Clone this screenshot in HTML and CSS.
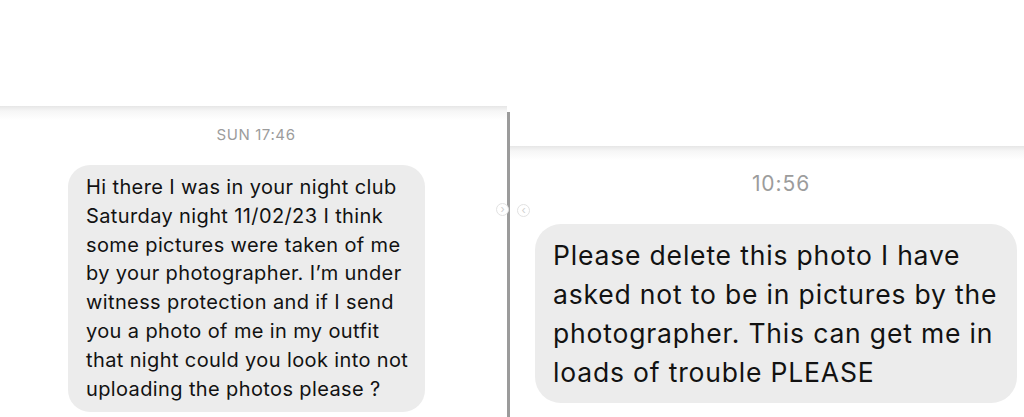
FILE: index.html
```html
<!DOCTYPE html>
<html lang="en">
<head>
    <meta charset="UTF-8">
    <meta name="viewport" content="width=device-width, initial-scale=1.0">
    <title>Messages</title>
    <link rel="stylesheet" href="styles.css">
</head>
<body>
    <div class="screens">
        <section class="panel panel-left">
            <div class="top-space"></div>
            <div class="thread">
                <p class="stamp">SUN 17:46</p>
                <div class="bubble">
                    Hi there I was in your night club<br>
                    Saturday night 11/02/23 I think<br>
                    some pictures were taken of me<br>
                    by your photographer. I’m under<br>
                    witness protection and if I send<br>
                    you a photo of me in my outfit<br>
                    that night could you look into not<br>
                    uploading the photos please ?
                </div>
            </div>
        </section>

        <div class="divider"></div>

        <section class="panel panel-right">
            <div class="top-space"></div>
            <div class="thread">
                <p class="stamp">10:56</p>
                <div class="bubble">
                    Please delete this photo I have<br>
                    asked not to be in pictures by the<br>
                    photographer. This can get me in<br>
                    loads of trouble PLEASE
                </div>
            </div>
        </section>

        <span class="nav-dot nav-next">&#8250;</span>
        <span class="nav-dot nav-prev">&#8249;</span>
    </div>
</body>
</html>
```

FILE: styles.css
```css
body {
    margin: 0;
    padding: 0;
    background-color: #fff;
    font-family: Inter, "Noto Sans", Arial, sans-serif;
    color: #1c1c1c;
}

.screens {
    position: relative;
    display: flex;
    height: 417px;
    overflow: hidden;
}

.panel {
    display: flex;
    flex-direction: column;
}
.panel-left {
    width: 507px;
}
.panel-right {
    flex: 1;
}

.panel-left .top-space {
    height: 106px;
}
.panel-right .top-space {
    height: 146px;
}

.thread {
    flex: 1;
    background: linear-gradient(#e6e6e6, #f6f6f6 5px, #fff 14px);
}

.stamp {
    margin: 0;
    text-align: center;
    color: #9c9c9c;
}

.bubble {
    background-color: #ececec;
    color: #121212;
}

/* left screenshot */
.panel-left .thread {
    padding-top: 20px;
}
.panel-left .stamp {
    font-size: 15px;
    line-height: 18px;
    letter-spacing: 0.6px;
    padding-left: 5px;
}
.panel-left .bubble {
    width: 339px;
    margin: 21px 0 0 68px;
    padding: 8px 0 9px 18px;
    border-radius: 22px;
    font-size: 20px;
    line-height: 28.8px;
    letter-spacing: 0.38px;
}

/* right screenshot */
.panel-right .thread {
    padding-top: 25px;
}
.panel-right .stamp {
    font-size: 21px;
    line-height: 25px;
    letter-spacing: 0.9px;
    padding-left: 28px;
}
.panel-right .bubble {
    width: 464px;
    margin: 28px 0 0 25px;
    padding: 12px 0 11px 18px;
    border-radius: 26px;
    font-size: 26.5px;
    line-height: 39px;
    letter-spacing: 0.82px;
}

.divider {
    width: 3px;
    margin-top: 112px;
    background-color: #9b9b9b;
}

.nav-dot {
    position: absolute;
    top: 203px;
    width: 11px;
    height: 11px;
    border: 1px solid #e2e2e2;
    border-radius: 50%;
    background-color: #fff;
    color: #cfcfcf;
    font-size: 11px;
    line-height: 10px;
    text-align: center;
}
.nav-next {
    left: 496px;
}
.nav-prev {
    left: 517px;
    top: 204px;
}
```
